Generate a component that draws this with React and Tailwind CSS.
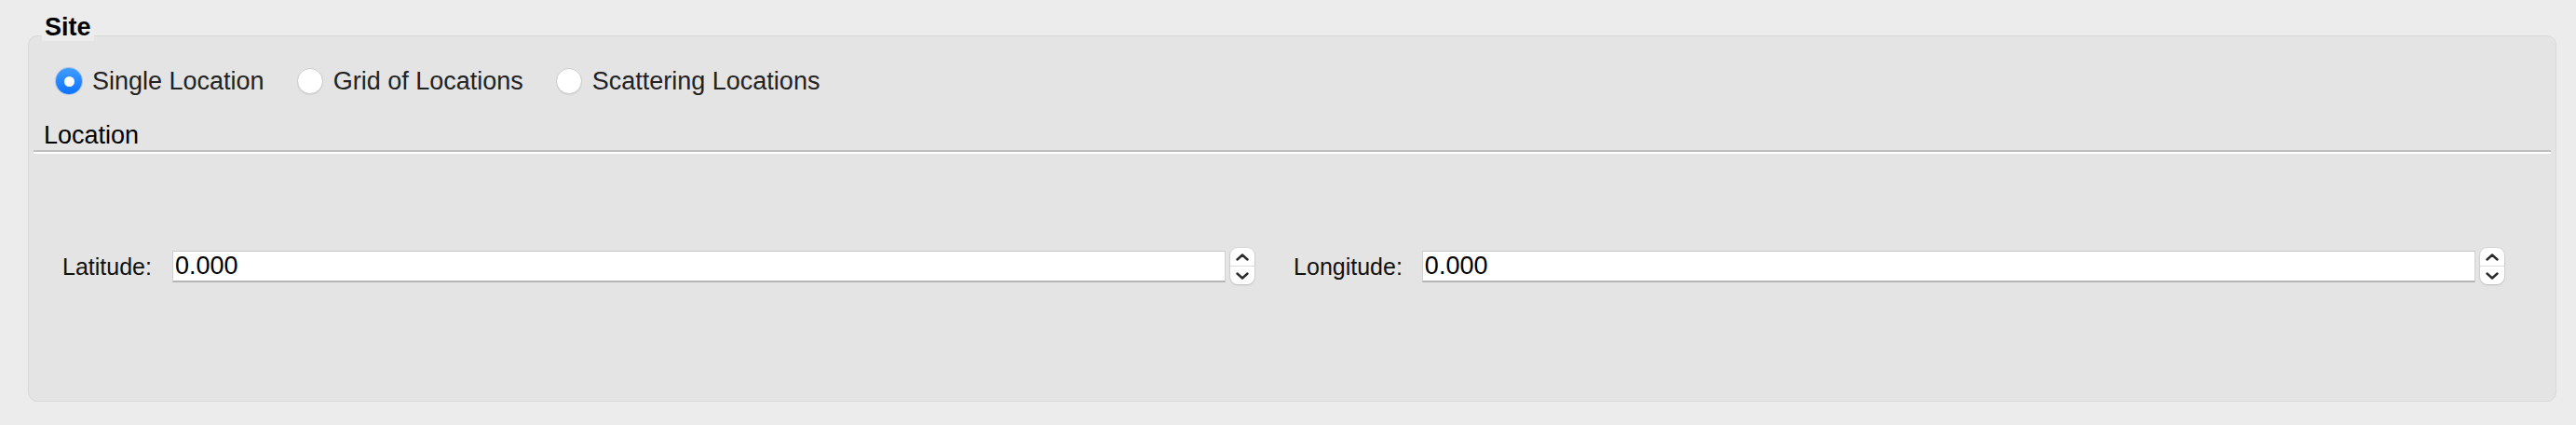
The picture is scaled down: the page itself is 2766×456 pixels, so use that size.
import React from "react";

function Radio({ checked, label }) {
  return (
    <label className="flex items-center gap-[11px]">
      {checked ? (
        <span className="flex h-[28px] w-[28px] items-center justify-center rounded-full bg-gradient-to-b from-[#3f9cff] to-[#0b72ff] shadow-[0_0_0_1px_rgba(0,90,220,0.25)]">
          <span className="h-[11px] w-[11px] rounded-full bg-white" />
        </span>
      ) : (
        <span className="h-[28px] w-[28px] rounded-full border border-[#cdcdcd] bg-white shadow-[0_1px_1px_rgba(0,0,0,0.08)]" />
      )}
      <span className="text-[27px] leading-[30px] text-[#222]">{label}</span>
    </label>
  );
}

function Stepper() {
  return (
    <div className="flex h-[39px] w-[26px] shrink-0 flex-col overflow-hidden rounded-[8px] bg-white shadow-[0_0_0_1px_rgba(0,0,0,0.06),0_1px_2px_rgba(0,0,0,0.12)]">
      <div className="flex flex-1 items-center justify-center">
        <svg width="14" height="8" viewBox="0 0 14 8">
          <path d="M1.5 6.5 L7 1.5 L12.5 6.5" fill="none" stroke="#2b2b2b" strokeWidth="2.4" strokeLinecap="round" strokeLinejoin="round" />
        </svg>
      </div>
      <div className="h-px bg-[#dcdcdc]" />
      <div className="flex flex-1 items-center justify-center">
        <svg width="14" height="8" viewBox="0 0 14 8">
          <path d="M1.5 1.5 L7 6.5 L12.5 1.5" fill="none" stroke="#2b2b2b" strokeWidth="2.4" strokeLinecap="round" strokeLinejoin="round" />
        </svg>
      </div>
    </div>
  );
}

function Field({ value }) {
  return (
    <input
      readOnly
      value={value}
      className="h-[34px] min-w-0 flex-1 border border-t-[#c9c9c9] border-x-[#d2d2d2] border-b-[#b5b5b5] border-b-2 bg-white pl-[2px] text-[27px] leading-[30px] text-black outline-none"
    />
  );
}

export default function App() {
  return (
    <div className="h-[456px] w-full overflow-hidden bg-[#ececec] pl-[30px] pr-[21px] pt-[38px] font-['Liberation_Sans',Arial,sans-serif]">
      <div className="relative h-[393px] rounded-[10px] border border-[#d9d9d9] bg-[#e4e4e4]">
        <div className="absolute left-[14px] top-[-25px] bg-[#ececec] px-[3px] text-[27px] font-bold leading-[30px] text-black">
          Site
        </div>

        <div className="flex items-center gap-[35px] pl-[29px] pt-[33px]">
          <Radio checked label="Single Location" />
          <Radio label="Grid of Locations" />
          <Radio label="Scattering Locations" />
        </div>

        <div className="mx-[5px] mt-[29px]">
          <div className="pl-[5px]">
            <span className="inline-block px-[6px] text-[27px] leading-[29px] text-black">Location</span>
          </div>
          <div className="h-[2px] bg-[#bfbfbf]" />
          <div className="h-[2px] bg-white" />
        </div>

        <div className="mt-[101px] flex h-[39px] items-center pl-[36px] pr-[55px]">
          <span className="mr-[22px] text-[25px] leading-[30px] text-[#111]">Latitude:</span>
          <Field value="0.000" />
          <div className="ml-[5px]">
            <Stepper />
          </div>
          <span className="ml-[42px] mr-[21px] text-[25px] leading-[30px] text-[#111]">Longitude:</span>
          <Field value="0.000" />
          <div className="ml-[5px]">
            <Stepper />
          </div>
        </div>
      </div>
    </div>
  );
}
